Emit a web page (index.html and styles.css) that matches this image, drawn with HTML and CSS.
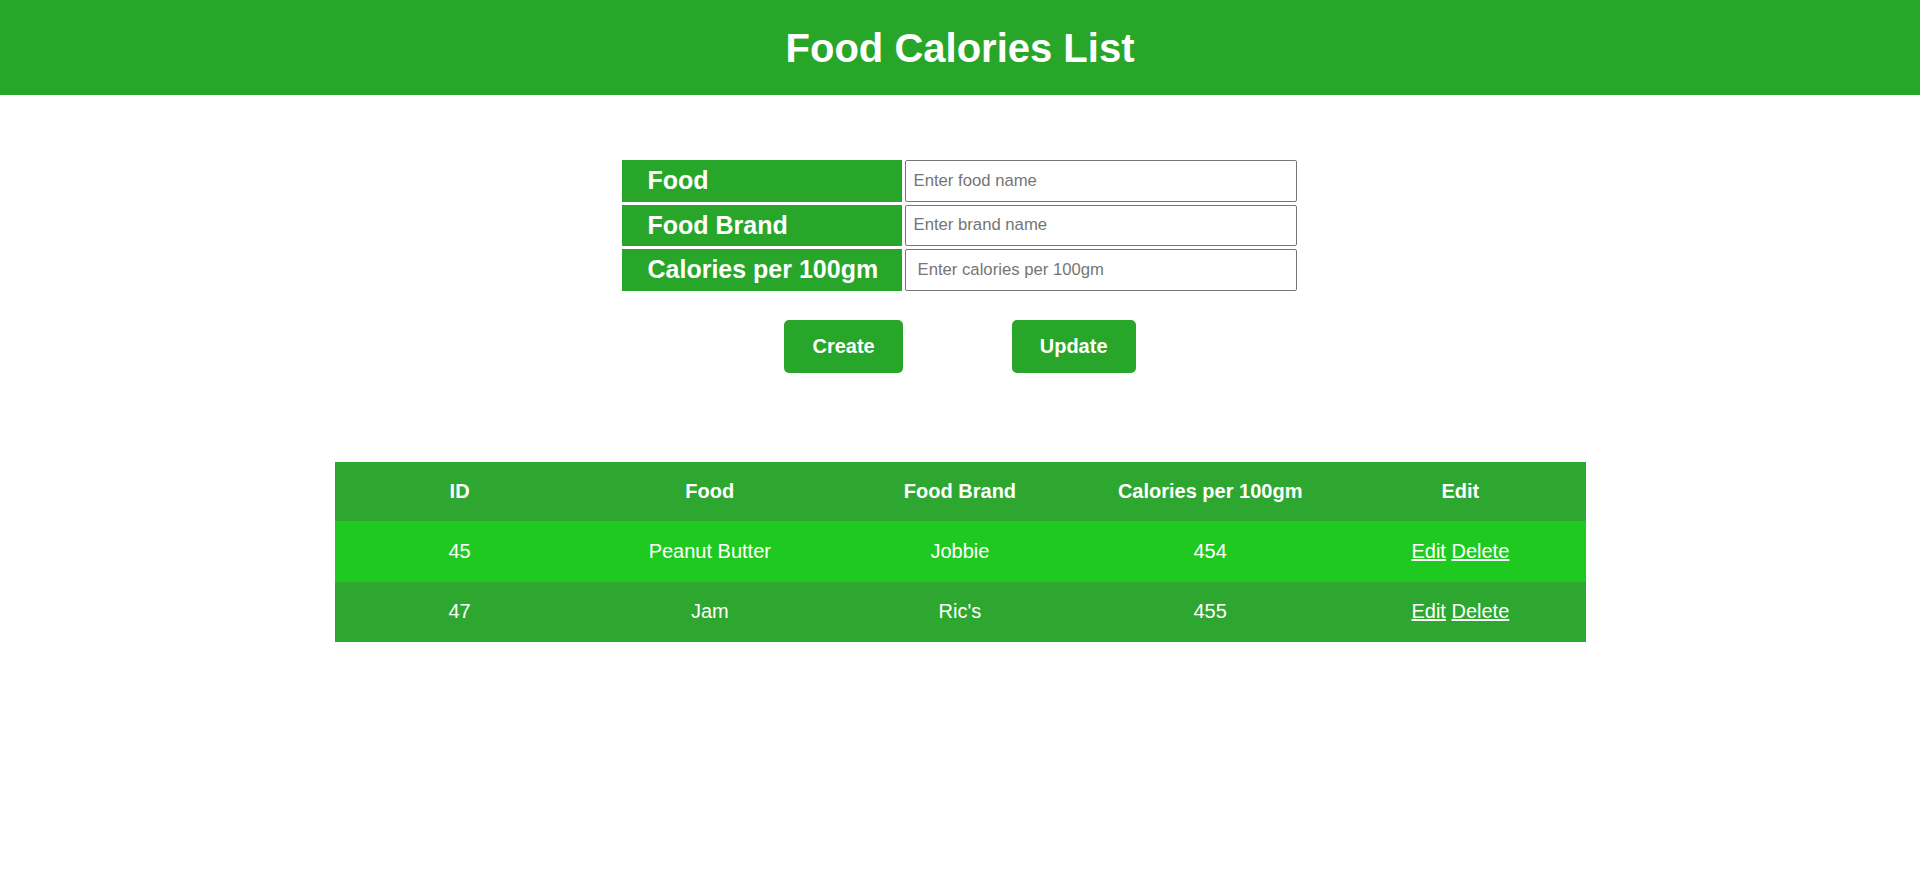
FILE: index.html
```html
<!DOCTYPE html>
<html lang="en">
<head>
<meta charset="utf-8">
<title>Food Calories List</title>
<link rel="stylesheet" href="styles.css">
</head>
<body>
<header class="topbar">
  <h1 class="title">Food Calories List</h1>
</header>
<main class="main">
  <form class="food-form">
    <label class="field-label" for="food">Food</label>
    <input class="field-input" id="food" type="text" placeholder="Enter food name">
    <label class="field-label" for="brand">Food Brand</label>
    <input class="field-input" id="brand" type="text" placeholder="Enter brand name">
    <label class="field-label" for="cal">Calories per 100gm</label>
    <input class="field-input field-input-wide" id="cal" type="text" placeholder="Enter calories per 100gm">
  </form>
  <div class="actions">
    <button class="btn" type="button">Create</button>
    <button class="btn" type="button">Update</button>
  </div>
  <table class="food-table">
    <thead>
      <tr class="head-row">
        <th>ID</th><th>Food</th><th>Food Brand</th><th>Calories per 100gm</th><th>Edit</th>
      </tr>
    </thead>
    <tbody>
      <tr class="row-light">
        <td>45</td><td>Peanut Butter</td><td>Jobbie</td><td>454</td>
        <td><a class="link" href="#">Edit</a> <a class="link" href="#">Delete</a></td>
      </tr>
      <tr class="row-dark">
        <td>47</td><td>Jam</td><td>Ric's</td><td>455</td>
        <td><a class="link" href="#">Edit</a> <a class="link" href="#">Delete</a></td>
      </tr>
    </tbody>
  </table>
</main>
</body>
</html>
```
FILE: styles.css
```css
* { box-sizing: border-box; }
html, body { margin: 0; padding: 0; background: #fff; }
body { font-family: "Liberation Sans", Arial, sans-serif; color: #fff; }

.topbar {
  background: #28a62a;
  height: 95px;
  display: flex;
  align-items: center;
  justify-content: center;
}
.title {
  margin: 0;
  font-size: 40px;
  font-weight: bold;
  color: #fff;
  line-height: 1;
}

.main {
  display: flex;
  flex-direction: column;
  align-items: center;
  padding-top: 65px;
}

.food-form {
  display: grid;
  grid-template-columns: 280px 392px;
  column-gap: 3px;
  row-gap: 3px;
  grid-auto-rows: 41.5px;
  margin-left: -2px;
}
.field-label {
  background: #28a62a;
  color: #fff;
  font-weight: bold;
  font-size: 25px;
  padding-left: 26px;
  display: flex;
  align-items: center;
}
.field-input {
  border: 1px solid #767676;
  border-radius: 2px;
  font-family: "Liberation Sans", Arial, sans-serif;
  font-size: 16.7px;
  padding: 0 0 0 8px;
  color: #000;
  background: #fff;
  height: 100%;
}
.field-input-wide { padding-left: 12px; }
.field-input::placeholder { color: #757575; }

.actions {
  display: flex;
  gap: 109px;
  margin-top: 29px;
}
.btn {
  background: #28a62a;
  color: #fff;
  border: none;
  border-radius: 5px;
  height: 53px;
  padding: 0 28px;
  font-family: "Liberation Sans", Arial, sans-serif;
  font-size: 20px;
  font-weight: bold;
}

.food-table {
  margin-top: 89px;
  width: 1251px;
  border-collapse: collapse;
  table-layout: fixed;
  font-size: 20px;
  color: #fff;
}
.food-table th, .food-table td {
  text-align: center;
  padding: 0;
}
.head-row { background: #2ea730; height: 59px; }
.head-row th { font-weight: bold; }
.row-light { background: #1fca20; height: 61px; }
.row-dark { background: #2ea730; height: 60px; }
.link { color: #fff; text-decoration: underline; }
```
